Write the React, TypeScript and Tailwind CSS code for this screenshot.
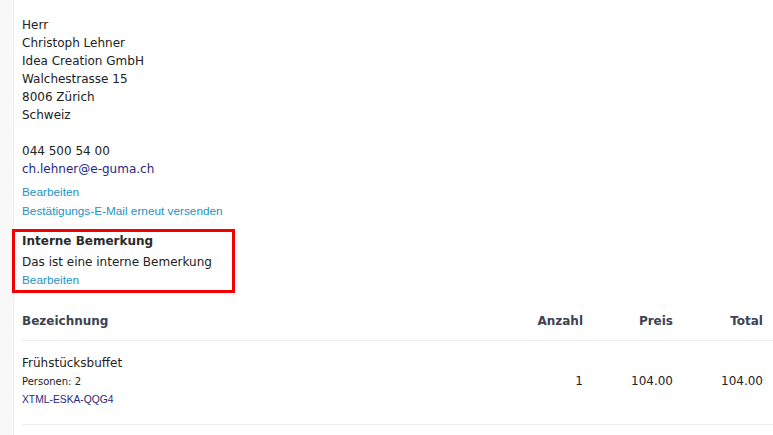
const rows = [
  {
    name: 'Frühstücksbuffet',
    detail: 'Personen: 2',
    code: 'XTML-ESKA-QQG4',
    qty: '1',
    price: '104.00',
    total: '104.00',
  },
];

const linkCls =
  "font-['Liberation_Sans',Arial,sans-serif] text-[11.8px] text-[#2393c4] hover:underline";

export default function App() {
  return (
    <div className="flex min-h-[435px] w-[773px] bg-white font-['DejaVu_Sans',Verdana,sans-serif] text-[12px] text-[#222]">
      <div className="w-[14px] shrink-0 border-r border-[#f0f0f0] bg-[#f8f8f8]" />
      <div className="flex-1 pl-2 pt-[16px]">
        <div className="leading-[18px]">
          <div>Herr</div>
          <div>Christoph Lehner</div>
          <div>Idea Creation GmbH</div>
          <div>Walchestrasse 15</div>
          <div>8006 Zürich</div>
          <div>Schweiz</div>
          <div className="mt-[18px]">044 500 54 00</div>
          <a href="#" className="block text-[#27287f]">
            ch.lehner@e-guma.ch
          </a>
        </div>
        <div className="mt-[5px] flex flex-col leading-[18px]">
          <a href="#" className={linkCls}>
            Bearbeiten
          </a>
          <a href="#" className={`${linkCls} mt-[1px]`}>
            Bestätigungs-E-Mail erneut versenden
          </a>
        </div>

        <div className="-ml-[10px] mt-[9px] w-[223px] border-[3px] border-[#f50000] pb-[2px] pl-[7px] pt-[1px]">
          <div className="font-bold leading-[16px] text-[#2a2a2a]">Interne Bemerkung</div>
          <div className="mt-[4px] leading-[18px]">Das ist eine interne Bemerkung</div>
          <a href="#" className={`${linkCls} mt-[1px] block leading-[16px]`}>
            Bearbeiten
          </a>
        </div>

        <div className="mt-[19px]">
          <div className="flex border-b border-[#e9ecf0] pb-[10px] font-bold leading-[18px] text-[#3c4253]">
            <div className="flex-1">Bezeichnung</div>
            <div className="w-[90px] text-right">Anzahl</div>
            <div className="w-[90px] text-right">Preis</div>
            <div className="w-[100px] pr-[10px] text-right">Total</div>
          </div>
          {rows.map((r) => (
            <div
              key={r.code}
              className="flex items-center border-b border-[#e9ecf0] pb-[16px] pt-[13px]"
            >
              <div className="flex-1">
                <div className="leading-[18px]">{r.name}</div>
                <div className="mt-[2px] text-[10px] leading-[16px]">{r.detail}</div>
                <a
                  href="#"
                  className="mt-[2px] block font-['Liberation_Sans',Arial,sans-serif] text-[10.3px] leading-[16px] text-[#27287f]"
                >
                  {r.code}
                </a>
              </div>
              <div className="w-[90px] text-right">{r.qty}</div>
              <div className="w-[90px] text-right">{r.price}</div>
              <div className="w-[100px] pr-[10px] text-right">{r.total}</div>
            </div>
          ))}
        </div>
      </div>
    </div>
  );
}
